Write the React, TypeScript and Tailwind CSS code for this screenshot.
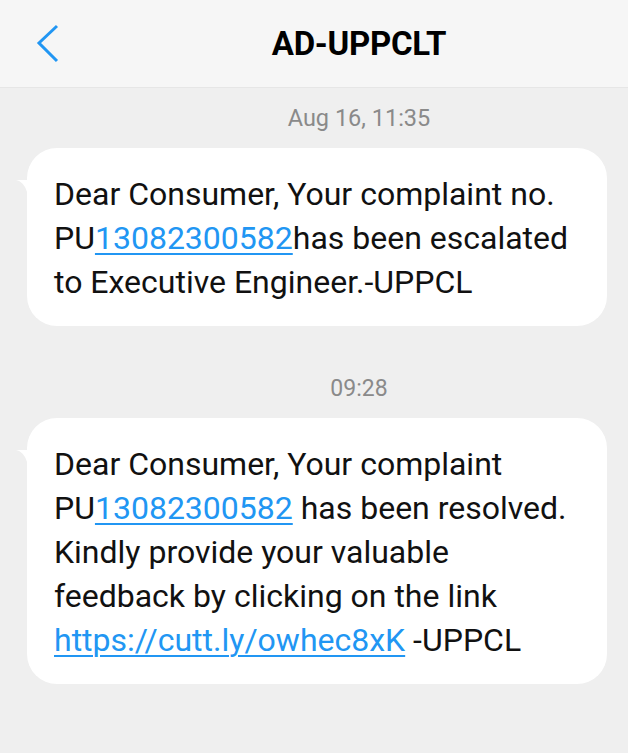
import React from "react";

const font = { fontFamily: "Roboto, 'Noto Sans', sans-serif" };

function Tail() {
  return (
    <svg
      className="absolute left-[-11px] top-[32px]"
      width="14"
      height="14"
      viewBox="0 0 14 14"
    >
      <path d="M0 0 L14 0 L14 14 L11 12 C9 5 5 1 0 0 Z" fill="#ffffff" />
    </svg>
  );
}

function Bubble({ children, pt }: { children: React.ReactNode; pt: string }) {
  return (
    <div className={`relative ml-[27px] mr-[21px] bg-white rounded-[30px] pl-[27px] pr-[16px] pb-[22px] ${pt}`}>
      <Tail />
      <div className="text-[32px] leading-[44px] text-[#111111]">{children}</div>
    </div>
  );
}

function Link({ children }: { children: React.ReactNode }) {
  return <span className="text-[#2196f3] underline decoration-[2px] underline-offset-[4px]">{children}</span>;
}

export default function App() {
  return (
    <div className="w-[628px] h-[753px] bg-[#efefef] overflow-hidden" style={font}>
      <div className="relative h-[88px] bg-[#f6f6f6] border-b border-[#e6e6e6] flex items-center">
        <svg className="absolute left-[30px] top-[24px]" width="32" height="40" viewBox="0 0 32 40">
          <path d="M27 2 L9 19 L27 37" fill="none" stroke="#2196f3" strokeWidth="3" />
        </svg>
        <div className="w-full pl-[90px] text-center text-[33px] font-bold text-black leading-none tracking-[-0.3px]">
          AD-UPPCLT
        </div>
      </div>

      <div className="mt-[19px] pl-[90px] text-center text-[23.5px] leading-[22px] text-[#8a8a8a]">
        Aug 16, 11:35
      </div>

      <div className="mt-[19px]">
        <Bubble pt="pt-[24px]">
          <div className="whitespace-nowrap">Dear Consumer, Your complaint no.</div>
          <div className="whitespace-nowrap">
            PU<Link>13082300582</Link>has been escalated
          </div>
          <div className="whitespace-nowrap">to Executive Engineer.-UPPCL</div>
        </Bubble>
      </div>

      <div className="mt-[52px] pl-[90px] text-center text-[23px] leading-[22px] text-[#8a8a8a]">
        09:28
      </div>

      <div className="mt-[18px]">
        <Bubble pt="pt-[24px]">
          <div className="whitespace-nowrap">Dear Consumer, Your complaint</div>
          <div className="whitespace-nowrap">
            PU<Link>13082300582</Link> has been resolved.
          </div>
          <div className="whitespace-nowrap">Kindly provide your valuable</div>
          <div className="whitespace-nowrap">feedback by clicking on the link</div>
          <div className="whitespace-nowrap">
            <Link>https://cutt.ly/owhec8xK</Link> -UPPCL
          </div>
        </Bubble>
      </div>
    </div>
  );
}
